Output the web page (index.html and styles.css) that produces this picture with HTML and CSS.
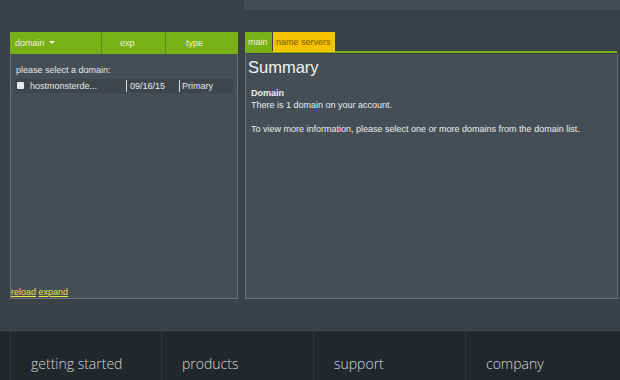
FILE: index.html
```html
<!DOCTYPE html>
<html>
<head>
<meta charset="utf-8">
<link rel="stylesheet" href="styles.css">
</head>
<body>
<div class="page">
  <div class="topbar"><div class="topbox"></div></div>
  <div class="content">
    <div class="left">
      <div class="grid-head">
        <div class="col col-domain">domain <span class="caret"></span></div>
        <div class="col col-exp">exp</div>
        <div class="col col-type">type</div>
      </div>
      <div class="left-body">
        <div class="prompt">please select a domain:</div>
        <div class="row">
          <span class="check"></span>
          <span class="cell name">hostmonsterde...</span>
          <span class="cell date">09/16/15</span>
          <span class="cell kind">Primary</span>
        </div>
        <div class="links"><a href="#">reload</a> <a href="#">expand</a></div>
      </div>
    </div>
    <div class="right">
      <div class="tabs">
        <div class="tab tab-main">main</div>
        <div class="tab tab-ns">name servers</div>
      </div>
      <div class="right-body">
        <h1 class="title">Summary</h1>
        <div class="label">Domain</div>
        <p class="text">There is 1 domain on your account.</p>
        <p class="text gap">To view more information, please select one or more domains from the domain list.</p>
      </div>
    </div>
  </div>
  <div class="footer">
    <div class="fcell">getting started</div>
    <div class="fcell">products</div>
    <div class="fcell">support</div>
    <div class="fcell">company</div>
  </div>
</div>
</body>
</html>
```
FILE: styles.css
```css
html, body {
  margin: 0;
  padding: 0;
  background: #3a4248;
  font-family: "Liberation Sans", Arial, sans-serif;
}
.page {
  width: 620px;
  height: 380px;
  overflow: hidden;
  display: flex;
  flex-direction: column;
}
.topbar {
  display: flex;
  height: 10px;
  padding-left: 244px;
}
.topbox {
  flex: 1;
  background: #434c52;
}
.content {
  display: flex;
  gap: 7px;
  padding: 22px 2px 0 10px;
  height: 298px;
  box-sizing: border-box;
}
.left {
  width: 228px;
  display: flex;
  flex-direction: column;
}
.grid-head {
  display: flex;
  height: 22px;
  background: #78b015;
  color: #eef6dc;
  font-size: 9px;
}
.col {
  display: flex;
  align-items: center;
}
.col-domain {
  width: 92px;
  padding-left: 5px;
  box-sizing: border-box;
  border-right: 1px solid #5f8c12;
}
.caret {
  display: inline-block;
  width: 0;
  height: 0;
  border-left: 3px solid transparent;
  border-right: 3px solid transparent;
  border-top: 3px solid #eef6dc;
  margin-left: 4px;
}
.col-exp {
  width: 64px;
  padding-left: 18px;
  box-sizing: border-box;
  border-right: 1px solid #5f8c12;
}
.col-type {
  flex: 1;
  padding-left: 20px;
}
.left-body {
  flex: 1;
  border: 1px solid #6b7479;
  border-top: none;
  background: #454e54;
  display: flex;
  flex-direction: column;
  padding: 0 4px 0 0;
  font-size: 9px;
  color: #e6e9ea;
}
.prompt {
  margin: 11px 0 0 5px;
}
.row {
  display: flex;
  align-items: center;
  height: 14px;
  margin: 4px 0 0 4px;
  background: #3e464c;
}
.check {
  width: 7px;
  height: 7px;
  background: #e8ebec;
  border-radius: 1px;
  margin: 0 6px 0 2px;
}
.cell {
  white-space: nowrap;
}
.name {
  width: 96px;
}
.date {
  width: 53px;
  border-left: 1px solid #d8dcde;
  padding-left: 3px;
  box-sizing: border-box;
  line-height: 12px;
}
.kind {
  border-left: 1px solid #d8dcde;
  padding-left: 2px;
  line-height: 12px;
}
.links {
  margin-top: auto;
  margin-bottom: 1px;
  font-size: 9px;
}
.links a {
  color: #e8e64a;
  text-decoration: underline;
}
.right {
  flex: 1;
  display: flex;
  flex-direction: column;
}
.tabs {
  display: flex;
  height: 19px;
  border-bottom: 2px solid #78b015;
  margin-right: 1px;
}
.tab {
  font-size: 9px;
  display: flex;
  align-items: center;
  padding: 0 3px;
  height: 20px;
}
.tab-main {
  background: #78b015;
  color: #eef6dc;
  width: 27px;
  box-sizing: border-box;
}
.tab-ns {
  background: #f5c300;
  color: #7a5a00;
  margin-left: 1px;
  width: 62px;
  box-sizing: border-box;
}
.right-body {
  flex: 1;
  border: 1px solid #6b7479;
  border-top: none;
  background: #454e54;
  color: #eceeef;
  padding: 4px 0 0 2px;
  margin-top: 1px;
  font-size: 9px;
}
.title {
  font-size: 16.5px;
  font-weight: normal;
  margin: 0 0 10px 0;
  line-height: 19px;
  color: #f2f4f5;
}
.label {
  font-weight: bold;
  margin-left: 3px;
  line-height: 12px;
}
.text {
  margin: 0 0 0 3px;
  line-height: 12px;
}
.text.gap {
  margin-top: 12px;
}
.footer {
  margin-top: 32px;
  height: 50px;
  background: #22272c;
  border-top: 1px solid #2c3237;
  display: flex;
  padding-left: 10px;
}
.fcell {
  width: 152px;
  border-left: 1px solid #30373c;
  box-sizing: border-box;
  padding: 22px 0 0 20px;
  font-family: "Open Sans", sans-serif;
  font-weight: 300;
  font-size: 14px;
  color: #d4d7d9;
}
.fcell:first-child {
  width: 151px;
}
```
